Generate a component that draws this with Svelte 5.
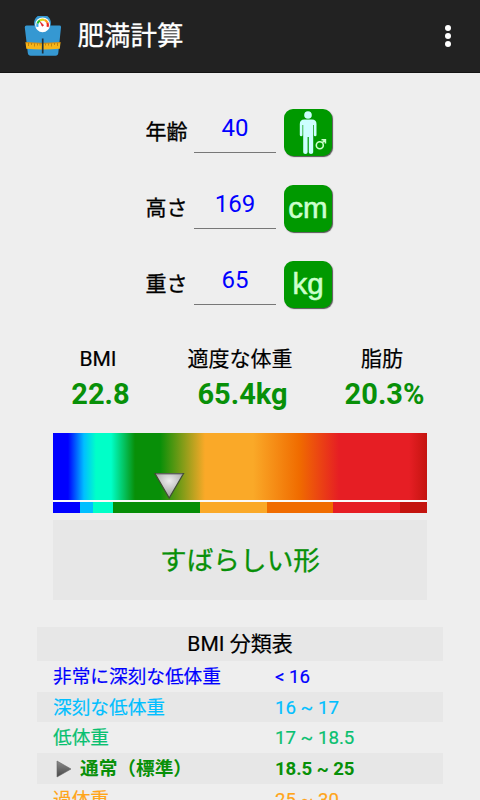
<script>
  const fields = [
    { label: '年齢', value: '40', unit: '' },
    { label: '高さ', value: '169', unit: 'cm' },
    { label: '重さ', value: '65', unit: 'kg' }
  ];
  const results = [
    { label: 'BMI', value: '22.8' },
    { label: '適度な体重', value: '65.4kg' },
    { label: '脂肪', value: '20.3%' }
  ];
  const segments = [
    { size: 27, color: '#0000ff' },
    { size: 13, color: '#00bfff' },
    { size: 20, color: '#00ffc8' },
    { size: 87, color: '#088f08' },
    { size: 66.5, color: '#faa928' },
    { size: 66.5, color: '#f06c00' },
    { size: 67, color: '#e61e24' },
    { size: 27, color: '#c4140f' }
  ];
  const classes = [
    { name: '非常に深刻な低体重', range: '< 16', color: '#0000ff' },
    { name: '深刻な低体重', range: '16 ~ 17', color: '#00bfff' },
    { name: '低体重', range: '17 ~ 18.5', color: '#08c070' },
    { name: '通常（標準）', range: '18.5 ~ 25', color: '#089008', current: true },
    { name: '過体重', range: '25 ~ 30', color: '#ffa519' }
  ];
</script>

<div class="screen">
  <header>
    <svg class="logo" width="38" height="41" viewBox="0 0 38 41">
      <path d="M2.5 9.5H10.5A8.4 8.4 0 1 1 26.500 9.500H35.500Q37.300 9.500 37 11.500L34.300 37Q34 39.700 31.500 39.700H6.800Q4.200 39.700 3.800 37L.8 11.500Q.6 9.500 2.500 9.500Z" fill="#3598d2" />
      <circle cx="18.600" cy="8.800" r="7.400" fill="#fff" />
      <g fill="none" stroke-width="2.200">
        <path d="M13.600 10.800A5.300 5.300 0 0 1 13.500 7.500" stroke="#35a9ef" />
        <path d="M13.500 7.500A5.300 5.300 0 0 1 16 4.500" stroke="#24bd35" />
        <path d="M16 4.500A5.300 5.300 0 0 1 20.500 4" stroke="#d9dd18" />
        <path d="M20.500 4A5.300 5.300 0 0 1 23.400 6.800" stroke="#ff9d17" />
        <path d="M23.400 6.800A5.300 5.300 0 0 1 23.500 10.800" stroke="#ef291d" />
      </g>
      <path d="M16.300 6L19.600 9.200L18.200 10.200Z" fill="#e02020" stroke="#e02020" stroke-width=".7" />
      <path d="M1.500 26.500Q18.500 28 36.500 26.500L35.800 32.800Q18.500 34 2.300 32.800Z" fill="#f7b519" />
      <path d="M1.500 26.700Q18.500 28 36.500 26.700" fill="none" stroke="#dc8c08" />
      <path d="M4.500 27v3M7.500 27v2M10.500 27.500v3M13.500 27.500v2M16 27.500v2M21.500 27.500v2M24.500 27.500v2M27.500 27.500v3M30.500 27v2M33.500 27v3" stroke="#a87010" stroke-width=".7" />
      <path d="M18.700 22.500V37.500" stroke="#20313a" stroke-width="1.700" />
    </svg>
    <h1>肥満計算</h1>
    <div class="menu"><i></i><i></i><i></i></div>
  </header>

  <section class="form">
    {#each fields as f}
      <div class="field">
        <span class="label">{f.label}</span>
        <span class="value">{f.value}</span>
        <span class="button">
          {#if f.unit}
            <span class="unit">{f.unit}</span>
          {:else}
            <svg width="48" height="47" viewBox="0 0 48 47">
              <g fill="#ccffff">
                <circle cx="24" cy="6" r="3.800" />
                <path d="M20.300 10.500H28Q32.500 10.500 32.500 15V26Q32.500 27.300 31.200 27.300T29.900 26V16H29.200V43.200Q29.200 45 27 45T24.800 43.200V28H23.600V43.200Q23.600 45 21.400 45T19.200 43.200V16H18.500V26Q18.500 27.300 17.200 27.300T15.800 26V15Q15.800 10.500 20.300 10.500Z" />
              </g>
              <g fill="none" stroke="#ccffcc" stroke-width="1.600">
                <circle cx="35.800" cy="36.300" r="3.500" />
                <path d="M38.300 33.800L41.500 30.600M37.500 30.700H41.400V34.600" />
              </g>
            </svg>
          {/if}
        </span>
      </div>
    {/each}
  </section>

  <section class="results">
    {#each results as r}
      <div class="result">
        <span class="caption">{r.label}</span>
        <strong>{r.value}</strong>
      </div>
    {/each}
  </section>

  <section class="scale">
    <div class="spectrum">
      <svg class="pointer" width="32" height="28" viewBox="0 0 32 28">
        <defs>
          <radialGradient id="metal" cx=".5" cy=".3" r=".6">
            <stop offset="0" stop-color="#ededed" />
            <stop offset="1" stop-color="#a6a6a6" />
          </radialGradient>
        </defs>
        <path d="M2 1.500H30.500L16.200 26Z" fill="url(#metal)" stroke="#424d35" stroke-width="1.200" />
        <path d="M3 2H29.500" stroke="#77777a" />
      </svg>
    </div>
    <div class="segments">
      {#each segments as s}
        <span style="flex-grow: {s.size}; background: {s.color}"></span>
      {/each}
    </div>
  </section>

  <div class="verdict">すばらしい形</div>

  <section class="table">
    <h2>BMI 分類表</h2>
    {#each classes as c}
      <div class="row" class:current={c.current} style="color: {c.color}">
        <span class="name">
          {#if c.current}
            <svg width="17" height="18" viewBox="0 0 17 18">
              <defs>
                <linearGradient id="arrow" x2="0" y2="1">
                  <stop offset="0" stop-color="#8b8b8b" />
                  <stop offset="1" stop-color="#484848" />
                </linearGradient>
              </defs>
              <path d="M1 1L15 9L1 17Z" fill="url(#arrow)" stroke="#666" stroke-width=".6" />
            </svg>
          {/if}
          {c.name}
        </span>
        <span class="range">{c.range}</span>
      </div>
    {/each}
  </section>
</div>

<style>
  :global(body) {
    margin: 0;
    overflow: hidden;
  }
  .screen {
    width: 480px;
    height: 800px;
    overflow: hidden;
    background: #eee;
    color: #000;
    font-family: Roboto, 'Noto Sans CJK JP', sans-serif;
  }
  header {
    box-sizing: border-box;
    height: 73px;
    display: flex;
    align-items: center;
    padding: 0 29px 0 24px;
    background: #222;
    border-bottom: 1px solid #141414;
  }
  h1 {
    flex: 1;
    margin: 0 0 0 15.5px;
    color: #fff;
    font-size: 26.5px;
    font-weight: 400;
    line-height: 36px;
    -webkit-text-stroke: 0.3px;
  }
  .menu {
    display: flex;
    flex-direction: column;
    gap: 2px;
  }
  .menu i {
    width: 6px;
    height: 6px;
    border-radius: 50%;
    background: #fff;
  }
  .form {
    display: flex;
    flex-direction: column;
    gap: 28px;
    padding: 36px 0 0 145px;
  }
  .field {
    display: flex;
    height: 48px;
  }
  .label {
    width: 49px;
    font-size: 21px;
    line-height: 47px;
    text-indent: 0.5px;
    -webkit-text-stroke: 0.3px;
  }
  .value {
    box-sizing: border-box;
    width: 82px;
    height: 44px;
    border-bottom: 1px solid #777;
    color: #00f;
    font-size: 24px;
    line-height: 38px;
    text-align: center;
  }
  .button {
    width: 48px;
    height: 47px;
    margin-left: 8px;
    border-radius: 9px;
    background: #090;
    box-shadow: 1px 1px 1px #555;
  }
  .button svg {
    display: block;
  }
  .unit {
    display: block;
    color: #cfc;
    font: 29.5px/45px 'Liberation Sans', sans-serif;
    text-align: center;
    -webkit-text-stroke: 0.6px;
  }
  .results {
    display: flex;
    padding: 35px 27px 0;
  }
  .result {
    flex: 1;
    display: flex;
    flex-direction: column;
    align-items: center;
    white-space: nowrap;
  }
  .caption {
    font-size: 21px;
    line-height: 30px;
    -webkit-text-stroke: 0.2px;
  }
  .result strong {
    padding-left: 5px;
    color: #089008;
    font-size: 29px;
    line-height: 41px;
    font-weight: 700;
  }
  .scale {
    padding: 18px 53px 0;
  }
  .spectrum {
    position: relative;
    height: 67px;
    border-bottom: 2px solid #fafafa;
    background: linear-gradient(90deg, #00f 0, #00f 15px, #00bfff 31px, #00ffc8 43px, #00ffc8 58px, #088f08 82px, #088f08 107px, #faa928 152px, #faa928 200px, #f06c00 246px, #e61e24 286px, #e61e24 356px, #c4140f 374px);
  }
  .pointer {
    position: absolute;
    left: 100px;
    top: 39px;
  }
  .segments {
    display: flex;
    height: 11px;
  }
  .segments span {
    flex-basis: 0;
  }
  .verdict {
    height: 80px;
    margin: 7px 53px 0;
    background: #e7e7e7;
    color: #089008;
    font-size: 26.67px;
    line-height: 82px;
    text-align: center;
    -webkit-text-stroke: 0.3px;
  }
  .table {
    margin: 27px 37px 0;
  }
  h2 {
    margin: 0;
    background: #e7e7e7;
    font-size: 21px;
    font-weight: 400;
    line-height: 35px;
    height: 34px;
    text-align: center;
    -webkit-text-stroke: 0.2px;
  }
  .row {
    display: flex;
    height: 30.67px;
    padding-left: 16px;
    font-size: 18.67px;
    line-height: 32.67px;
    -webkit-text-stroke: 0.2px;
  }
  .row:nth-child(odd) {
    background: #e7e7e7;
  }
  .name {
    display: flex;
    align-items: center;
    width: 222px;
    height: 32.67px;
  }
  .name svg {
    margin: 0 7px 0 3px;
  }
  .current {
    font-weight: 700;
    -webkit-text-stroke: 0;
  }
  .current .range {
    letter-spacing: -0.1px;
  }
</style>
